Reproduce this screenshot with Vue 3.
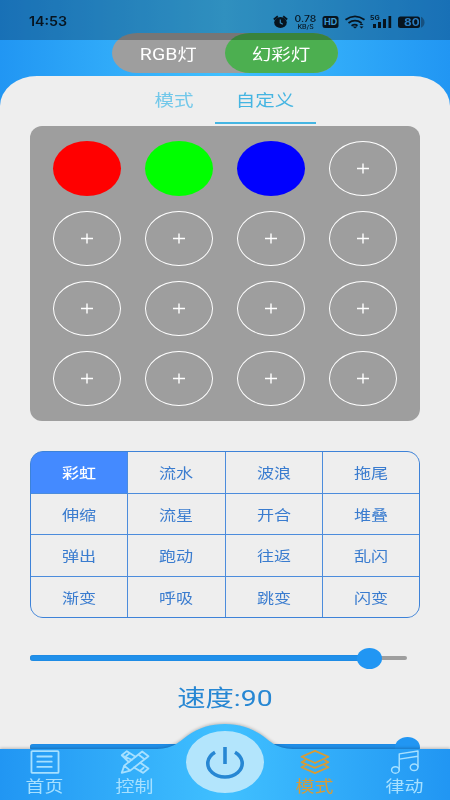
<script setup>
import { ref, computed } from "vue"

const lampType = ref("magic")
const tab = ref("custom")
const activeEffect = ref("彩虹")
const activeNav = ref("mode")
const speed = ref(90)
const brightness = ref(100)

const colors = ref(["#ff0000", "#00ff00", "#0000ff", ...Array(13).fill(null)])

const effects = [
  "彩虹", "流水", "波浪", "拖尾",
  "伸缩", "流星", "开合", "堆叠",
  "弹出", "跑动", "往返", "乱闪",
  "渐变", "呼吸", "跳变", "闪变"
]

const sliderWidth = computed(() => `${speed.value}%`)
const brightnessWidth = computed(() => `${brightness.value}%`)
</script>

<template>
  <main>
    <div class="status">
      <span class="time">14:53</span>
      <svg class="status-icons" width="156" height="24" viewBox="0 0 156 24">
        <ellipse cx="8.5" cy="12.5" rx="6.3" ry="5.4" />
        <path d="M1.8 9.5l4-3.3M15.2 9.5l-4-3.3" class="line" />
        <path d="M8.3 9.5v3.3l2.5 1.4" class="cut" />
        <rect x="50.5" y="6" width="16" height="12" rx="2.5" />
        <path d="M73.5 9.8q9.5-6.8 19 0M76.5 13q6.5-4.6 13 0M79.5 15.8q3.5-2.2 6 0" class="line" />
        <path d="M80.5 16.5h5l-2.5 2zM87.5 15l2-1.8 2 1.8zM87.5 16.5h4l-2 2z" />
        <path d="M101 14h3v4h-3zM106 12h3v6h-3zM111 9h3v9h-3zM116.5 6h2.7v12h-2.7z" />
        <rect x="126" y="6.5" width="22" height="11.5" rx="2.5" />
        <path d="M149 6.7q3.5 2 3.5 5.5t-3.5 5.500z" class="cap" />
      </svg>
      <div class="net">
        <b>0.78</b>
        <i>KB/S</i>
      </div>
      <span class="hd">HD</span>
      <span class="gen">5G</span>
      <span class="battery">80</span>
    </div>

    <div class="lamp-switch">
      <button :class="{ on: lampType === 'rgb' }" @click="lampType = 'rgb'"><span>RGB灯</span></button>
      <button :class="{ on: lampType === 'magic' }" @click="lampType = 'magic'"><span>幻彩灯</span></button>
    </div>

    <section class="sheet">
      <div class="tabs">
        <button class="tab tab-mode" :class="{ active: tab === 'mode' }" @click="tab = 'mode'"><span>模式</span></button>
        <button class="tab tab-custom" :class="{ active: tab === 'custom' }" @click="tab = 'custom'"><span>自定义</span></button>
      </div>

      <div class="palette">
        <div class="slot" v-for="(color, i) in colors" :key="i">
          <div class="dot" :class="{ empty: !color }" :style="color ? { backgroundColor: color } : null">
            <svg v-if="!color" width="12" height="11" viewBox="0 0 12 11">
              <path d="M0 5.5h12M6 0.5v10" stroke="#fff" stroke-width="1.4" />
            </svg>
          </div>
        </div>
      </div>

      <div class="effects">
        <button
          v-for="effect in effects"
          :key="effect"
          :class="{ selected: effect === activeEffect }"
          @click="activeEffect = effect"
        ><span>{{ effect }}</span></button>
      </div>

      <div class="slider">
        <div class="fill" :style="{ width: sliderWidth }"><div class="thumb"></div></div>
      </div>
      <p class="speed"><span>速度:{{ speed }}</span></p>
      <div class="slider">
        <div class="fill" :style="{ width: brightnessWidth }"><div class="thumb"></div></div>
      </div>
    </section>

    <nav>
      <svg class="nav-bg" width="450" height="86" viewBox="0 0 450 86">
        <defs>
          <linearGradient id="bar" x1="0" x2="1" y1="0" y2="0">
            <stop offset="0" stop-color="#2196f3" />
            <stop offset="0.5" stop-color="#40c0ff" />
            <stop offset="1" stop-color="#2196f3" />
          </linearGradient>
        </defs>
        <path d="M0 35H154C172 35 178 29 187 22C199 13.500 211 10 225 10S251 13.500 263 22C272 29 278 35 296 35H450V86H0Z" fill="url(#bar)" />
      </svg>
      <div class="nav-items">
        <button :class="{ current: activeNav === 'home' }" @click="activeNav = 'home'">
          <svg width="30" height="25" viewBox="0 0 30 25">
            <rect x="0.9" y="1.2" width="28.2" height="22.6" rx="1" />
            <path d="M7 6.8h15M7 12.2h15M7 17.6h15" />
          </svg>
          <span>首页</span>
        </button>
        <button :class="{ current: activeNav === 'control' }" @click="activeNav = 'control'">
          <svg width="30" height="25" viewBox="0 0 30 25">
            <path d="M22.5 1.5L29 6.5 10 21.5 1.2 23.8 3.8 16.3ZM18.5 4.7l6.5 5M3.8 16.3l6.2 5.2" />
            <path d="M11.5 10.2L1.2 5.5 6.5 1.2 15.5 7M1.2 5.5L8.5 12.5M6 6l3-2.3" />
            <path d="M20.5 13.2L29 19.2 23.5 23.8 14 18.3M20.5 21.5l3.5-3" />
          </svg>
          <span>控制</span>
        </button>
        <button class="power">
          <svg width="42" height="34" viewBox="0 0 42 34">
            <path d="M11 7.2A17.2 13.7 0 1 0 31 7.2M21 2v17" />
          </svg>
        </button>
        <button :class="{ current: activeNav === 'mode' }" @click="activeNav = 'mode'">
          <svg width="30" height="25" viewBox="0 0 30 25">
            <path d="M15 1l14 6-14 6.5L1 7ZM4.5 10.8L1 12.7l14 6 14-6-3.5-1.9M4.5 16.2L1 18l14 6 14-6-3.5-1.8" />
          </svg>
          <span>模式</span>
        </button>
        <button :class="{ current: activeNav === 'rhythm' }" @click="activeNav = 'rhythm'">
          <svg class="thin" width="30" height="25" viewBox="0 0 30 25">
            <path d="M9 20.5V4L28.5 1v16.5M9 9.5L28.5 6.5" />
            <ellipse cx="5" cy="20.8" rx="4" ry="3.4" />
            <ellipse cx="24.5" cy="18" rx="4" ry="3.4" />
          </svg>
          <span>律动</span>
        </button>
      </div>
    </nav>
  </main>
</template>

<style>
body {
  overflow: hidden;
}
</style>

<style scoped>
main {
  position: relative;
  width: 450px;
  height: 800px;
  overflow: hidden;
  background: linear-gradient(90deg, #2196f3, #40c0ff 50%, #2196f3);
  font-family: Roboto, "Noto Sans CJK SC", sans-serif;
}

main::before {
  content: "";
  display: block;
  height: 32.5px;
}

button {
  border: none;
  padding: 0;
  background: none;
  font-family: inherit;
  cursor: pointer;
}

button span,
.speed span {
  display: inline-block;
  transform: scaleX(1.22);
}

.status {
  position: absolute;
  top: 0;
  left: 0;
  width: 100%;
  height: 40px;
  background: rgba(0, 0, 0, 0.25);
  z-index: 3;
  color: #07141f;
}

.status span {
  position: absolute;
  line-height: 1;
  transform-origin: left top;
}

.status .time {
  left: 29px;
  top: 16px;
  font-size: 12.5px;
  font-weight: 600;
  font-family: Inter, sans-serif;
  transform: scaleX(1.14);
}

.status-icons {
  position: absolute;
  left: 272px;
  top: 10px;
  fill: #07141f;
}

.status-icons .line {
  fill: none;
  stroke: #07141f;
  stroke-width: 1.8;
}

.status-icons .cut {
  fill: none;
  stroke: #3189bb;
  stroke-width: 1.2;
}

.status-icons .cap {
  fill: #16507f;
}

.net {
  position: absolute;
  left: 294px;
  top: 14px;
  width: 23px;
  display: flex;
  flex-direction: column;
  align-items: center;
}

.net b {
  font: 500 9px/10px Inter, sans-serif;
  transform: scaleX(1.15);
}

.net i {
  font: normal 500 5.5px/7px Inter, sans-serif;
  transform: scaleX(1.25);
}

.status .hd {
  left: 324px;
  top: 18px;
  font: 700 9px/8px Inter, sans-serif;
  color: #3f9bd2;
}

.status .gen {
  left: 370px;
  top: 15px;
  font: 700 6px/6px Inter, sans-serif;
  transform: scaleX(1.15);
}

.status .battery {
  left: 403.5px;
  top: 17px;
  font: 700 10.5px/11px Inter, sans-serif;
  color: #2a7cc0;
  transform: scaleX(1.12);
}

.lamp-switch {
  display: flex;
  width: 226px;
  height: 40px;
  margin: 0 auto;
  background: #9e9e9e;
  border-radius: 25px / 20px;
}

.lamp-switch button {
  flex: 1;
  font-size: 16px;
  color: #fff;
  border-radius: 25px / 20px;
}

.lamp-switch .on {
  background: #4caf50;
}

.sheet {
  margin-top: 3.5px;
  height: 724px;
  box-sizing: border-box;
  padding: 0 30px;
  background: #eee;
  border-radius: 37px 37px 0 0 / 30px 30px 0 0;
}

.tabs {
  display: flex;
  height: 50px;
  padding-left: 103px;
}

.tab {
  height: 48px;
  font-size: 16px;
  color: #72c8ea;
  border-bottom: 2px solid transparent;
}

.tab-mode {
  width: 82px;
}

.tab-custom {
  width: 101px;
}

.tab.active {
  color: #45b5e2;
  border-color: #45b5e2;
}

.palette {
  display: grid;
  grid-template-columns: repeat(4, 1fr);
  grid-auto-rows: 70px;
  height: 295px;
  box-sizing: border-box;
  padding: 7.5px 11.5px;
  background: #9e9e9e;
  border-radius: 12px;
}

.slot {
  display: grid;
  place-items: center;
}

.dot {
  width: 68px;
  height: 55px;
  box-sizing: border-box;
  border-radius: 50%;
  display: grid;
  place-items: center;
}

.dot.empty {
  border: 1px solid #fff;
}

.effects {
  display: grid;
  grid-template-columns: repeat(4, 1fr);
  grid-template-rows: repeat(4, 1fr);
  gap: 1px;
  height: 167px;
  box-sizing: border-box;
  margin-top: 30px;
  border: 1px solid #3d82d8;
  border-radius: 13px;
  background: #4c8cdc;
  overflow: hidden;
}

.effects button {
  background: #eee;
  color: #3a7ccf;
  font-size: 14px;
}

.effects .selected {
  background: #448aff;
  color: #fff;
  font-weight: 500;
}

.slider {
  width: 377px;
  height: 4px;
  margin-top: 38px;
  border-radius: 2px;
  background: #9e9e9e;
}

.fill {
  display: flex;
  align-items: center;
  justify-content: flex-end;
  height: 6px;
  border-radius: 3px;
  background: #2090ea;
  box-shadow: inset 0 0 1px #1769b4;
  transform: translateY(-1px);
}

.thumb {
  flex: none;
  width: 25px;
  height: 21px;
  margin-right: -13px;
  border-radius: 50%;
  background: #2196f3;
}

.speed {
  height: 46px;
  margin: 15px 0 0;
  line-height: 46px;
  text-align: center;
  font-size: 22.5px;
  color: #2787d3;
}

.speed span {
  transform: scaleX(1.26);
}

.speed + .slider {
  margin-top: 24px;
}

nav {
  position: absolute;
  left: 0;
  bottom: 0;
  width: 450px;
  height: 86px;
  z-index: 2;
}

.nav-bg {
  position: absolute;
  left: 0;
  top: 0;
  filter: drop-shadow(0 -1px 1.5px rgba(0, 0, 0, 0.22));
}

.nav-items {
  position: relative;
  display: flex;
  height: 86px;
  align-items: flex-end;
}

.nav-items button {
  flex: 1;
  height: 50px;
  display: flex;
  flex-direction: column;
  align-items: center;
  color: #a6e0ff;
  font-size: 15.5px;
}

.nav-items svg {
  fill: none;
  stroke: currentColor;
  stroke-width: 1.9;
  stroke-linejoin: round;
  stroke-linecap: round;
}

.nav-items .thin {
  stroke-width: 1.5;
}

.nav-items button span {
  line-height: 26px;
}

.nav-items .current {
  color: #d89b35;
}

.nav-items .power {
  flex: none;
  width: 78px;
  height: 62px;
  margin: 0 6px 7px;
  border-radius: 50%;
  background: #b3e5fc;
  justify-content: center;
  color: #2787d3;
}

.nav-items .power svg {
  stroke-width: 3.6;
  stroke-linecap: butt;
}
</style>
